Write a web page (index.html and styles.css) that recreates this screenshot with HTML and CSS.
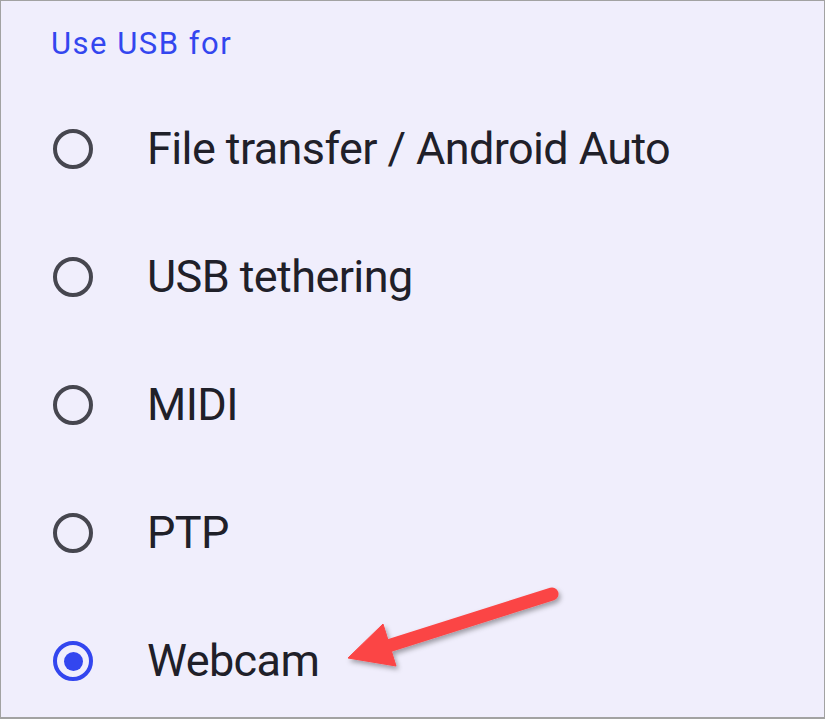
FILE: index.html
```html
<!DOCTYPE html>
<html lang="en">
<head>
    <meta charset="UTF-8">
    <title>Use USB for</title>
    <link rel="stylesheet" href="styles.css">
</head>
<body>
    <div class="panel">
        <h2 class="title">Use USB for</h2>
        <ul class="options">
            <li class="option"><span class="radio"></span><span class="label">File transfer / Android Auto</span></li>
            <li class="option"><span class="radio"></span><span class="label">USB tethering</span></li>
            <li class="option"><span class="radio"></span><span class="label">MIDI</span></li>
            <li class="option"><span class="radio"></span><span class="label">PTP</span></li>
            <li class="option"><span class="radio checked"></span><span class="label">Webcam</span></li>
        </ul>

        <svg class="arrow" width="825" height="719" viewBox="0 0 825 719">
            <defs>
                <filter id="shadow" x="-20%" y="-20%" width="140%" height="140%">
                    <feDropShadow dx="2" dy="3" stdDeviation="2.5" flood-color="#000" flood-opacity="0.35"/>
                </filter>
            </defs>
            <g filter="url(#shadow)" fill="#fb4545" stroke="#fb4545">
                <line x1="552" y1="594" x2="388" y2="646" stroke-width="13" stroke-linecap="round"/>
                <polygon points="348,658 383,624 396,666" stroke-width="1" stroke-linejoin="round"/>
            </g>
        </svg>
    </div>
</body>
</html>
```

FILE: styles.css
```css
html {
    font-family: 'Roboto', 'Open Sans', sans-serif;
}

body {
    margin: 0;
    background: #fff;
}

.panel {
    position: relative;
    width: 825px;
    height: 719px;
    box-sizing: border-box;
    border: 1px solid #a2a2a2;
    border-bottom-width: 2px;
    background: #f0eefc;
    overflow: hidden;
}

.title {
    margin: 0;
    height: 84px;
    padding-left: 50px;
    display: flex;
    align-items: center;
    font-size: 31px;
    font-weight: 400;
    letter-spacing: 1.5px;
    color: #3346ef;
}

.options {
    list-style: none;
    margin: 0;
    padding: 0;
}

.option {
    height: 128px;
    display: flex;
    align-items: center;
    padding-left: 52px;
}

.radio {
    width: 40px;
    height: 40px;
    box-sizing: border-box;
    border: 4px solid #46464f;
    border-radius: 50%;
    display: flex;
    align-items: center;
    justify-content: center;
    flex-shrink: 0;
}

.radio.checked {
    border-color: #3346ef;
}

.radio.checked::after {
    content: '';
    width: 19px;
    height: 19px;
    border-radius: 50%;
    background: #3346ef;
}

.label {
    margin-left: 54px;
    padding-bottom: 2px;
    font-size: 45px;
    letter-spacing: -0.6px;
    color: #202029;
}

.arrow {
    position: absolute;
    top: -1px;
    left: -1px;
    pointer-events: none;
}
```
